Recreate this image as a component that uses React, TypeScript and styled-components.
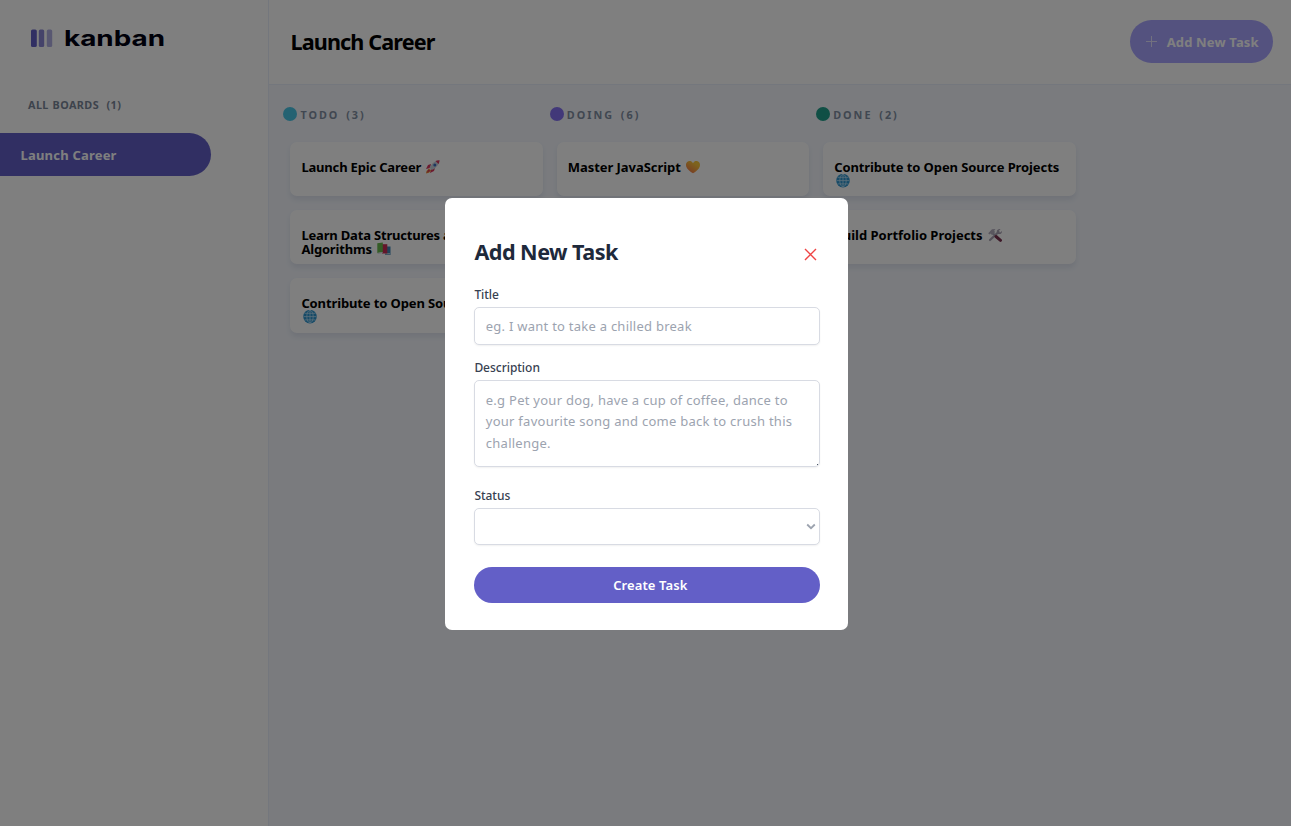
import React from "react";
import styled, { createGlobalStyle } from "styled-components";

const GlobalStyle = createGlobalStyle`
  *, *::before, *::after { box-sizing: border-box; }
  html, body { margin: 0; padding: 0; }
  body, input, textarea, select, button { font-family: "Noto Sans", "Open Sans", sans-serif; }
  h1, h2, h3, p, ul { margin: 0; padding: 0; }
`;

const Page = styled.div`
  display: flex;
  width: 100%;
  height: 100vh;
  overflow: hidden;
  background: #f4f7fd;
  color: #000;
`;

const Sidebar = styled.aside`
  width: 269px;
  flex: none;
  background: #fff;
  border-right: 1px solid #e9effa;
`;

const LogoWrap = styled.div`
  padding: 26px 0 0 30px;
  height: 97px;
  svg { display: block; }
`;

const BoardsTitle = styled.h3`
  padding-left: 28px;
  height: 36px;
  font-size: 10.8px;
  line-height: 16px;
  font-weight: 700;
  letter-spacing: 0.43px;
  word-spacing: 0.5px;
  color: #7b8799;
  white-space: pre;
`;

const BoardLink = styled.div`
  display: flex;
  align-items: center;
  width: 210.5px;
  height: 43px;
  padding-left: 20.5px;
  border-radius: 0 22px 22px 0;
  background: #635fc7;
  color: #fff;
  font-size: 13px;
  font-weight: 700;
  letter-spacing: 0.2px;
`;

const Main = styled.main`
  flex: 1;
  min-width: 0;
  display: flex;
  flex-direction: column;
`;

const Header = styled.header`
  display: flex;
  align-items: center;
  justify-content: space-between;
  height: 85px;
  padding: 0 17.8px 2px 21.5px;
  background: #fff;
  border-bottom: 1px solid #e9effa;
`;

const BoardName = styled.h1`
  padding-top: 2px;
  font-size: 21.6px;
  line-height: 30px;
  font-weight: 700;
  letter-spacing: -0.87px;
`;

const AddButton = styled.button`
  display: flex;
  align-items: center;
  width: 143px;
  height: 43px;
  padding: 0 0 0 16px;
  gap: 9.5px;
  border: 0;
  border-radius: 22px;
  background: #a8a4ff;
  color: #fff;
  font-size: 13px;
  font-weight: 700;
  letter-spacing: 0.15px;
  white-space: nowrap;
  span { padding-top: 1px; }
`;

const Columns = styled.div`
  display: flex;
  gap: 14px;
  padding: 22px 0 0 14.2px;
`;

const Column = styled.section`
  width: 252.4px;
  flex: none;
`;

const ColumnHead = styled.div`
  display: flex;
  align-items: flex-start;
  gap: 3.2px;
  height: 15px;
  margin-bottom: 20px;
`;

const Dot = styled.span<{ $color: string }>`
  width: 14px;
  height: 14px;
  border-radius: 50%;
  background: ${(p) => p.$color};
`;

const ColumnName = styled.span`
  padding-top: 1px;
  font-size: 10.8px;
  line-height: 14px;
  font-weight: 700;
  letter-spacing: 2px;
  word-spacing: -1.4px;
  color: #828fa3;
  white-space: pre;
`;

const Cards = styled.div`
  display: flex;
  flex-direction: column;
  gap: 14px;
  margin-left: 7.2px;
`;

const Card = styled.article`
  width: 252.4px;
  height: 54.2px;
  padding: 18px 0 0 11px;
  border-radius: 7px;
  background: #fff;
  box-shadow: 0 3.6px 5.4px rgba(54, 78, 126, 0.1);
  font-size: 13px;
  line-height: 14px;
  font-weight: 700;
  letter-spacing: -0.12px;
  white-space: pre-line;
`;

const CardText = styled.span<{ $tracking: number }>`
  letter-spacing: ${(p) => p.$tracking}px;
`;

const Emoji = styled.svg`
  width: 16px;
  height: 14px;
  margin-left: 1px;
  vertical-align: -2px;
`;

const Overlay = styled.div`
  position: fixed;
  inset: 0;
  display: flex;
  align-items: center;
  justify-content: center;
  padding: 2px 0 0 2.4px;
  background: rgba(0, 0, 0, 0.5);
`;

const Dialog = styled.div`
  width: 403.6px;
  height: 431.4px;
  padding: 38.7px 28.7px 0 28.9px;
  border-radius: 7px;
  background: #fff;
  color: #1e293b;
`;

const DialogHead = styled.div`
  display: flex;
  align-items: center;
  justify-content: space-between;
  height: 30px;
  margin-bottom: 18px;
`;

const DialogTitle = styled.h2`
  padding-left: 0.6px;
  font-size: 21.6px;
  line-height: 30px;
  font-weight: 700;
  letter-spacing: -0.53px;
`;

const Close = styled.svg`
  width: 13px;
  height: 13px;
  margin: 6px 3px 0 0;
`;

const Field = styled.div<{ $gap: number }>`
  margin-bottom: ${(p) => p.$gap}px;
`;

const Label = styled.label`
  display: block;
  height: 22px;
  padding: 1px 0 0 0.6px;
  font-size: 12px;
  line-height: 18px;
  font-weight: 500;
  letter-spacing: -0.03px;
  color: #374151;
`;

const Control = `
  display: block;
  width: 100%;
  border: 1px solid #d8dbe3;
  border-radius: 5px;
  background: #fff;
  box-shadow: 0 1px 2px rgba(0, 0, 0, 0.06);
  font-size: 13px;
  outline: none;
  &::placeholder { color: #9ca3af; opacity: 1; }
`;

const Input = styled.input`
  ${Control}
  height: 38px;
  padding: 0 11px;
  letter-spacing: 0.25px;
`;

const TextAreaWrap = styled.div`
  position: relative;
  &::after {
    content: "";
    position: absolute;
    right: 2px;
    bottom: 2px;
    width: 1px;
    height: 1px;
    background: #4b5563;
  }
`;

const TextArea = styled.textarea`
  ${Control}
  height: 87px;
  padding: 8.6px 11px 7px;
  line-height: 21.6px;
  letter-spacing: 0.26px;
  overflow: hidden;
  resize: none;
`;

const Select = styled.div`
  ${Control}
  display: flex;
  align-items: center;
  justify-content: flex-end;
  height: 37px;
  padding-right: 2.5px;
`;

const Submit = styled.button`
  display: block;
  width: 100%;
  height: 36px;
  padding: 0 0 0 7px;
  border: 0;
  border-radius: 18px;
  background: #635fc7;
  color: #fff;
  font-size: 13px;
  font-weight: 600;
  letter-spacing: 0.1px;
`;

const Logo = () => (
  <svg width="140" height="26" viewBox="0 0 140 26" role="img">
    <rect x="1" y="3.500" width="5.800" height="17.500" rx="1.600" fill="#635fc7" />
    <rect x="8.800" y="3.500" width="5.400" height="17.500" rx="1.600" fill="#635fc7" opacity=".75" />
    <rect x="16.800" y="3.500" width="5.400" height="17.500" rx="1.600" fill="#635fc7" opacity=".5" />
    <text
      x="34"
      y="20"
      fontFamily="Inter, sans-serif"
      fontWeight="750"
      fontSize="22"
      textLength="101"
      lengthAdjust="spacingAndGlyphs"
      fill="#000112"
    >
      kanban
    </text>
  </svg>
);

const Rocket = () => (
  <Emoji viewBox="0 0 16 14">
    <path d="M6 4 3 5 1 9l4-1zM10 8 9 11l-4 2 1-4z" fill="#d9365f" />
    <path d="M14.5.2C10.500.3 7 3 4.500 7.800l2.200 2.200C11.500 7.700 14.300 4.300 14.500.2z" fill="#c9d3df" />
    <path d="M14.500.2c-1.600 0-2.900.3-4 .9l3 3c.6-1.200 1-2.500 1-3.900z" fill="#d9365f" />
    <circle cx="9.800" cy="4.900" r="1.500" fill="#3b6fc0" />
    <path d="M4 8.500 1.500 11l-.5 2.500 3-.7 2.200-2.200z" fill="#f09a35" />
    <path d="m3.500 9.500-2 3.500 3.800-2.200z" fill="#d9365f" />
  </Emoji>
);

const Books = () => (
  <Emoji viewBox="0 0 16 14">
    <path d="M9 4.500h5.500V13H9z" fill="#3f86b5" />
    <path d="M9 11.200h5V12.400H9z" fill="#d5dde2" />
    <path d="M6 2.200h5.300v9.300H6z" fill="#c92d55" />
    <path d="M1.300 1.200 6.800.600v9.300L1.300 11z" fill="#68b84c" />
    <path d="m1.300 11 5.500-1.100v1L1.800 12z" fill="#d5dde2" />
  </Emoji>
);

const Globe = () => (
  <Emoji viewBox="0 0 16 14">
    <circle cx="8" cy="6.600" r="6.800" fill="#2c94cf" />
    <g fill="none" stroke="#b9dff5" strokeWidth=".8">
      <ellipse cx="8" cy="6.600" rx="3.200" ry="6.300" />
      <path d="M8 .2v12.800M1.500 6.600h13M2.500 3.300h11M2.500 9.900h11" />
    </g>
  </Emoji>
);

const Heart = () => (
  <Emoji viewBox="0 0 16 14">
    <defs>
      <linearGradient id="heart" x1="1" y1="0" x2="0.2" y2="1">
        <stop offset=".3" stopColor="#fbc63a" />
        <stop offset="1" stopColor="#f0744a" />
      </linearGradient>
    </defs>
    <path
      d="M8 3.200C6.900 1 4.800.8 3.400 1.300 1.300 2.100.6 4.300 1.200 6.400 2 9.200 5.200 11.500 8 13.200c2.800-1.700 6-4 6.800-6.800.6-2.100-.1-4.300-2.200-5.100C11.200.8 9.100 1 8 3.200z"
      fill="url(#heart)"
    />
  </Emoji>
);

const Tools = () => (
  <Emoji viewBox="0 0 16 14">
    <path d="M3 12 11.500 4" stroke="#a9a3b4" strokeWidth="2.200" strokeLinecap="round" />
    <path d="M13.500 1.200 11.700 3l.3 1.200 1.200.3L15 2.900c.2 1.700-.9 3.200-2.800 3.200-1.600 0-2.700-1.400-2.400-2.900.3-1.500 1.900-2.600 3.700-2z" fill="#a9a3b4" />
    <path d="m5.500 5 4 3.500" stroke="#a9a3b4" strokeWidth="2" />
    <path d="m9 8.500 4.500 3.800" stroke="#7b3350" strokeWidth="3" strokeLinecap="round" />
    <path d="M1.200 5.200 5 1.200 8.500 1 7.300 2.500l.7 1.800L5 7.200 3.800 5.500l-1.300.9z" fill="#b4aebf" />
  </Emoji>
);

type Task = { text: string; tracking: number; icon: React.ReactNode };

const columns: { name: string; color: string; cards: Task[] }[] = [
  {
    name: "TODO  (3)",
    color: "#49c4e5",
    cards: [
      { text: "Launch Epic Career ", tracking: -0.18, icon: <Rocket /> },
      { text: "Learn Data Structures and\nAlgorithms ", tracking: -0.18, icon: <Books /> },
      { text: "Contribute to Open Source Projects\n", tracking: -0.12, icon: <Globe /> },
    ],
  },
  {
    name: "DOING  (6)",
    color: "#8471f2",
    cards: [{ text: "Master JavaScript ", tracking: -0.05, icon: <Heart /> }],
  },
  {
    name: "DONE  (2)",
    color: "#219e8a",
    cards: [
      { text: "Contribute to Open Source Projects\n", tracking: -0.1, icon: <Globe /> },
      { text: "Build Portfolio Projects ", tracking: -0.02, icon: <Tools /> },
    ],
  },
];

export default function App() {
  return (
    <>
      <GlobalStyle />
      <Page>
        <Sidebar>
          <LogoWrap><Logo /></LogoWrap>
          <BoardsTitle>{"ALL BOARDS  (1)"}</BoardsTitle>
          <BoardLink>Launch Career</BoardLink>
        </Sidebar>
        <Main>
          <Header>
            <BoardName>Launch Career</BoardName>
            <AddButton>
              <svg width="11" height="11" viewBox="0 0 11 11">
                <path d="M5.500 0v11M0 5.500h11" stroke="#fff" strokeWidth="1" opacity=".7" />
              </svg>
              <span>Add New Task</span>
            </AddButton>
          </Header>
          <Columns>
            {columns.map((column) => (
              <Column key={column.name}>
                <ColumnHead>
                  <Dot $color={column.color} />
                  <ColumnName>{column.name}</ColumnName>
                </ColumnHead>
                <Cards>
                  {column.cards.map((card) => (
                    <Card key={card.text}>
                      <CardText $tracking={card.tracking}>{card.text}</CardText>
                      {card.icon}
                    </Card>
                  ))}
                </Cards>
              </Column>
            ))}
          </Columns>
        </Main>
      </Page>
      <Overlay>
        <Dialog>
          <DialogHead>
            <DialogTitle>Add New Task</DialogTitle>
            <Close viewBox="0 0 13 13">
              <path d="M1 1l11 11M12 1 1 12" stroke="#ef4444" strokeWidth="1.400" />
            </Close>
          </DialogHead>
          <Field $gap={13}>
            <Label>Title</Label>
            <Input placeholder="eg. I want to take a chilled break" />
          </Field>
          <Field $gap={19}>
            <Label>Description</Label>
            <TextAreaWrap>
              <TextArea placeholder="e.g Pet your dog, have a cup of coffee, dance to your favourite song and come back to crush this challenge." />
            </TextAreaWrap>
          </Field>
          <Field $gap={22}>
            <Label>Status</Label>
            <Select>
              <svg width="10" height="7" viewBox="0 0 10 7">
                <path d="M1.200 1.500 5 5.200l3.800-3.700" fill="none" stroke="#9ca3af" strokeWidth="1.800" />
              </svg>
            </Select>
          </Field>
          <Submit>Create Task</Submit>
        </Dialog>
      </Overlay>
    </>
  );
}
